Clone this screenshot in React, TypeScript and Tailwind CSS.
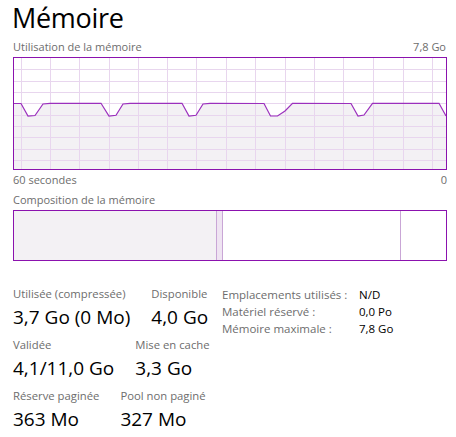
import React from "react";

const FONT = { fontFamily: '"Open Sans", "Noto Sans", sans-serif' };

const vx = [21, 50, 79, 109, 138, 167, 196, 226, 255, 285, 314, 343, 373, 403, 432];
const hy = [69, 81, 92, 103, 115, 126, 137, 149, 160];

const pts: [number, number][] = [
  [13, 103.5], [21, 103.5], [28, 116], [35, 115.5], [43, 104], [50, 103.3],
  [101, 103.3], [109, 116], [116, 115.3], [123, 104], [130, 103.3],
  [182, 103.3], [189, 116], [196, 115.3], [203, 104], [210, 103.3],
  [264, 103.5], [270.5, 116], [277.5, 116], [285, 111], [292.5, 103.3],
  [351, 103.5], [358, 116], [364, 115], [372.5, 103.3],
  [439, 103.3], [446, 116],
];

function Graph() {
  const ox = 14;
  const oy = 58;
  const line = pts.map(([x, y]) => `${x - ox},${y - oy}`).join(" ");
  const fill = `0,111 ${line} 432,111`;
  return (
    <div className="w-[434px] h-[113px] border border-[#8b12ae] bg-white">
      <svg width="432" height="111" viewBox="0 0 432 111" className="block">
        <polygon points={fill} fill="#f3f1f4" />
        {vx.map((x) => (
          <line key={"v" + x} x1={x - ox + 0.5} x2={x - ox + 0.5} y1={0} y2={111} stroke="#e8d6ee" strokeWidth={1} />
        ))}
        {hy.map((y) => (
          <line key={"h" + y} x1={0} x2={432} y1={y - oy + 0.5} y2={y - oy + 0.5} stroke="#e8d6ee" strokeWidth={1} />
        ))}
        <polyline points={line} fill="none" stroke="#9b30bd" strokeWidth={1.2} />
      </svg>
    </div>
  );
}

function Stat({ label, value }: { label: string; value: string }) {
  return (
    <div className="flex flex-col">
      <div className="h-[18px] leading-[18px] text-[11.3px] text-[#6d6d6d] whitespace-nowrap">{label}</div>
      <div className="h-[28px] leading-[28px] text-[19px] text-black whitespace-nowrap">{value}</div>
    </div>
  );
}

export default function App() {
  return (
    <div className="w-[456px] h-[437px] bg-white overflow-hidden pl-[12px]" style={FONT}>
      <div className="h-[38px] text-[27px] leading-[36px] text-black tracking-[-0.3px]">Mémoire</div>
      <div className="w-[434px] pl-[1px] h-[19px] flex items-center justify-between text-[11px] text-[#6d6d6d]">
        <span>Utilisation de la mémoire</span>
        <span>7,8 Go</span>
      </div>
      <div className="pl-[1px]">
        <Graph />
      </div>
      <div className="w-[435px] pl-[1px] h-[20px] flex items-center justify-between text-[11px] text-[#6d6d6d]">
        <span>60 secondes</span>
        <span>0</span>
      </div>
      <div className="pl-[1px] h-[20px] flex items-center text-[11px] text-[#6d6d6d]">
        <span>Composition de la mémoire</span>
      </div>
      <div className="pl-[1px]">
        <div className="w-[434px] h-[51px] border border-[#8b12ae] flex">
          <div className="w-[203px] bg-[#f3f1f4] border-r border-[#c9a6d6]" />
          <div className="w-[6px] bg-[#efe4f2] border-r border-[#c9a6d6]" />
          <div className="w-[178px] border-r border-[#c9a6d6]" />
          <div className="flex-1" />
        </div>
      </div>
      <div className="mt-[24px] pl-[1px] flex items-start">
        <div className="flex flex-col gap-[5px] w-[209px]">
          <div className="flex gap-[21px]">
            <Stat label="Utilisée (compressée)" value="3,7 Go (0 Mo)" />
            <Stat label="Disponible" value="4,0 Go" />
          </div>
          <div className="flex gap-[21px]">
            <Stat label="Validée" value="4,1/11,0 Go" />
            <Stat label="Mise en cache" value="3,3 Go" />
          </div>
          <div className="flex gap-[21px]">
            <Stat label="Réserve paginée" value="363 Mo" />
            <Stat label="Pool non paginé" value="327 Mo" />
          </div>
        </div>
        <div className="grid grid-cols-[137px_auto] content-start text-[11.5px] leading-[17px] pt-[1px]">
          <span className="text-[#6d6d6d] whitespace-nowrap">Emplacements utilisés :</span>
          <span className="text-black">N/D</span>
          <span className="text-[#6d6d6d] whitespace-nowrap">Matériel réservé :</span>
          <span className="text-black">0,0 Po</span>
          <span className="text-[#6d6d6d] whitespace-nowrap">Mémoire maximale :</span>
          <span className="text-black">7,8 Go</span>
        </div>
      </div>
    </div>
  );
}
